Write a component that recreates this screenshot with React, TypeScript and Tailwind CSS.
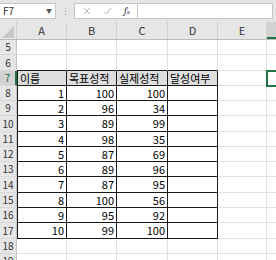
const rowHeights = [15, 16, 15, 15, 15, 16, 15, 15, 15, 16, 15, 15, 16, 15, 15];

const data: Record<number, number[]> = {
  8: [1, 100, 100],
  9: [2, 96, 34],
  10: [3, 89, 99],
  11: [4, 98, 35],
  12: [5, 87, 69],
  13: [6, 89, 96],
  14: [7, 87, 95],
  15: [8, 100, 56],
  16: [9, 95, 92],
  17: [10, 99, 100],
};

const headers = ['이름', '목표성적', '실제성적', '달성여부'];
const colWidths = ['w-[50px]', 'w-[50px]', 'w-[51px]', 'w-[50px]', 'w-[49px]'];
const colNames = ['A', 'B', 'C', 'D', 'E'];

const FormulaBar = () => (
  <div className="h-[22px] bg-[#e6e6e6] flex items-start pt-[3px]">
    <div className="w-[56px] h-[16px] bg-white border border-[#c6c6c6] border-l-0 flex items-center justify-between pl-[3px] pr-[3px]">
      <span className="text-[10px] text-[#333] leading-none">F7</span>
      <span className="text-[6px] text-[#555] leading-none">▼</span>
    </div>
    <div className="w-[18px] h-[16px] flex items-center justify-center text-[9px] text-[#9a9a9a] leading-none">⋮</div>
    <div className="w-[64px] h-[16px] bg-white border border-[#c6c6c6] flex items-center pl-[8px] gap-[12px] text-[#b5b5b5]">
      <svg width="8" height="8" viewBox="0 0 8 8" fill="none" stroke="currentColor" strokeWidth="1">
        <path d="M1 1 L7 7 M7 1 L1 7" />
      </svg>
      <svg width="9" height="8" viewBox="0 0 9 8" fill="none" stroke="currentColor" strokeWidth="1">
        <path d="M1 4.5 L3.5 7 L8 1" />
      </svg>
      <span className="text-[10px] italic text-[#444] leading-none font-serif">
        f<span className="text-[7px]">x</span>
      </span>
    </div>
    <div className="w-[135px] h-[16px] bg-white border border-[#c6c6c6] border-l-0" />
  </div>
);

const ColumnHeader = () => (
  <div className="h-[18px] flex bg-[#e6e6e6] border-b border-[#bdbdbd]">
    <div className="w-[17px] h-full shrink-0 flex items-end justify-end pr-[2px] pb-[1px] border-r border-[#cfcfcf]">
      <svg width="12" height="12" viewBox="0 0 12 12">
        <path d="M12 0 L12 12 L0 12 Z" fill="#c7c7c7" />
      </svg>
    </div>
    {colNames.map((name, i) => (
      <div
        key={name}
        className={`${colWidths[i]} h-full shrink-0 flex items-center justify-center text-[11px] text-[#333] border-r border-[#d0d0d0]`}
      >
        {name}
      </div>
    ))}
    <div className="flex-1 h-full bg-[#d2d2d2] border-b-2 border-[#217346]" />
  </div>
);

const Row = ({ n, h }: { n: number; h: number }) => {
  const inTable = n >= 7 && n <= 17;
  const topOfTable = n === 6;
  const isHeader = n === 7;
  const values = data[n];
  const selected = n === 7;

  return (
    <div className="flex" style={{ height: h }}>
      <div
        className={`w-[17px] h-full shrink-0 flex items-center justify-center text-[10px] leading-none border-b border-[#d8d8d8] ${
          selected
            ? 'bg-[#d2d2d2] text-[#217346] border-r-2 border-r-[#217346]'
            : 'bg-[#e6e6e6] text-[#333] border-r border-r-[#c4c4c4]'
        }`}
      >
        {n}
      </div>
      {colNames.map((name, i) => {
        const tableCol = i < 4;
        const blackRight = inTable && tableCol;
        const blackBottom = (inTable || topOfTable) && tableCol;
        const blackLeft = inTable && i === 0;
        return (
          <div
            key={name}
            className={`${colWidths[i]} h-full shrink-0 flex items-center text-[11px] leading-none text-black px-[2px] border-r border-b ${
              blackRight ? 'border-r-[#1a1a1a]' : 'border-r-[#e1e1e1]'
            } ${blackBottom ? 'border-b-[#1a1a1a]' : 'border-b-[#e1e1e1]'} ${
              blackLeft ? 'border-l border-l-[#1a1a1a]' : ''
            } ${isHeader && tableCol ? 'bg-[#dedede] justify-start' : 'justify-end'}`}
          >
            {isHeader && tableCol ? headers[i] : values && i < 3 ? values[i] : ''}
          </div>
        );
      })}
      <div className="flex-1 h-full relative border-b border-[#e1e1e1]">
        {selected && (
          <div className="absolute left-[-1px] top-[-1px] w-[20px] h-[17px] border-2 border-[#217346]" />
        )}
      </div>
    </div>
  );
};

export default function App() {
  return (
    <div
      className="w-[276px] h-[260px] overflow-hidden bg-white"
      style={{ fontFamily: '"Noto Sans CJK KR", "Noto Sans", sans-serif' }}
    >
      <FormulaBar />
      <ColumnHeader />
      {rowHeights.map((h, i) => (
        <Row key={i} n={i + 5} h={h} />
      ))}
    </div>
  );
}
